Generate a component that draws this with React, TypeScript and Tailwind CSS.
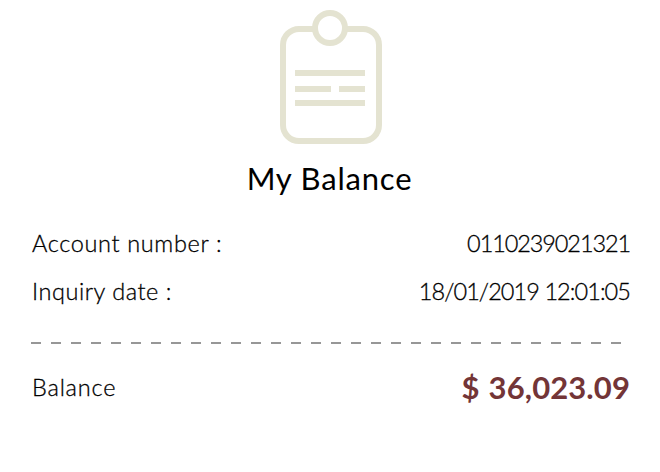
function ClipboardIcon() {
  return (
    <svg className="h-[136px] w-[102px] shrink-0" viewBox="280 9 102 136" fill="none" aria-hidden="true">
      <rect x="283" y="29" width="96" height="112" rx="16" stroke="#e4e3d1" strokeWidth="6" />
      <circle cx="330" cy="28" r="15" fill="#fff" stroke="#e4e3d1" strokeWidth="6" />
      <path d="M295 73H365M295 89H331M339 89H365M295 103H365" stroke="#e4e3d1" strokeWidth="6" />
    </svg>
  );
}

export default function App() {
  return (
    <main className="flex h-[472px] w-[660px] flex-col bg-white pt-[9px] pr-[30px] pl-8 font-[Lato,sans-serif] text-black whitespace-nowrap">
      <div className="flex flex-col items-center">
        <ClipboardIcon />
        <h1 className="mt-[13px] mr-[3px] text-[31px] leading-[40px] tracking-[0.8px]">My Balance</h1>
      </div>
      <dl className="mt-[21px] text-[23.5px] leading-[48px] font-light [-webkit-text-stroke:0.3px_black]">
        <div className="flex h-12 justify-between">
          <dt className="tracking-[0.65px]">Account number :</dt>
          <dd className="tracking-[-1.1px]">0110239021321</dd>
        </div>
        <div className="flex h-12 justify-between">
          <dt className="tracking-[0.55px]">Inquiry date :</dt>
          <dd className="tracking-[-0.93px]">18/01/2019 12:01:05</dd>
        </div>
      </dl>
      <div className="mt-[27px] -ml-px h-[2px] w-[590px] bg-[repeating-linear-gradient(90deg,#979797_0px_10px,transparent_10px_20px)]" />
      <div className="mt-[19px] flex h-12 justify-between leading-[48px]">
        <span className="text-[23.5px] font-light tracking-[0.8px] [-webkit-text-stroke:0.3px_black]">Balance</span>
        <strong className="text-[31px] font-bold tracking-[0.1px] [word-spacing:1.5px] text-[#733537]">$ 36,023.09</strong>
      </div>
    </main>
  );
}
